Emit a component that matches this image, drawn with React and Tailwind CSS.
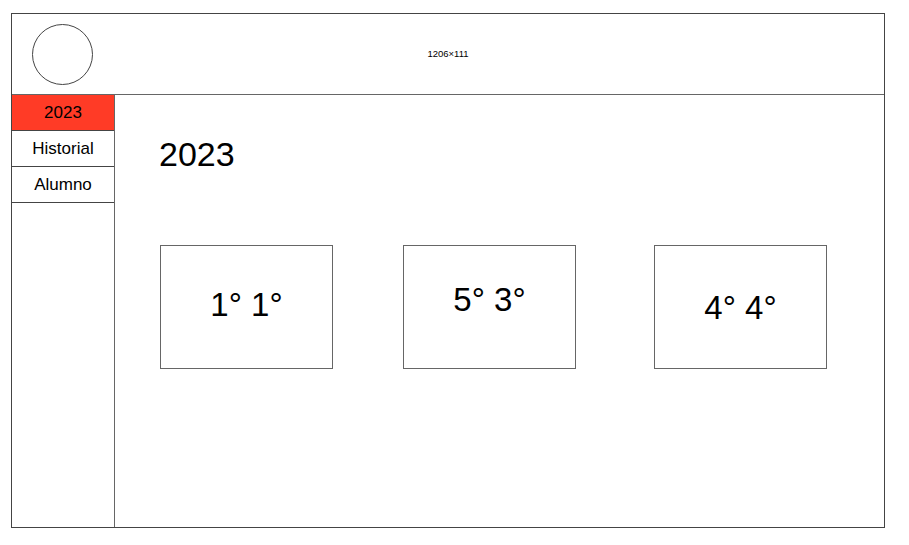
import React from 'react';

const cards = [
  { label: '1° 1°', className: 'ml-0 pb-[6px]' },
  { label: '5° 3°', className: 'ml-[70px] pb-[15px]' },
  { label: '4° 4°', className: 'ml-[78px] pb-0' },
];

const menu = [
  { label: '2023', active: true },
  { label: 'Historial' },
  { label: 'Alumno' },
];

export default function App() {
  return (
    <div className="w-[909px] h-[545px] bg-white pl-[11px] pt-[13px] font-['Liberation_Sans',Arial,sans-serif] text-black">
      <div className="w-[874px] h-[515px] border border-[#444] flex flex-col">
        <header className="h-[81px] border-b border-[#666] grid grid-cols-[1fr_auto_1fr] items-center">
          <div className="pl-[20px]">
            <div className="w-[61px] h-[61px] rounded-full border border-[#444]" />
          </div>
          <span className="text-[9.5px] leading-none -mt-[1px]">1206×111</span>
          <div />
        </header>

        <div className="flex flex-1">
          <nav className="w-[103px] border-r border-[#666] flex flex-col">
            {menu.map(item => (
              <div
                key={item.label}
                className={
                  'h-[36px] border-b border-[#444] flex items-center justify-center text-[17px] ' +
                  (item.active ? 'bg-[#ff3b26]' : 'bg-white')
                }
              >
                {item.label}
              </div>
            ))}
          </nav>

          <main className="flex-1 pl-[44px] pt-[42px]">
            <h1 className="text-[34px] leading-[34px]">2023</h1>
            <div className="flex ml-[1px] mt-[74px]">
              {cards.map(card => (
                <div
                  key={card.label}
                  className={
                    'w-[173px] h-[124px] border border-[#666] flex items-center justify-center text-[33px] leading-none ' +
                    card.className
                  }
                >
                  {card.label}
                </div>
              ))}
            </div>
          </main>
        </div>
      </div>
    </div>
  );
}
